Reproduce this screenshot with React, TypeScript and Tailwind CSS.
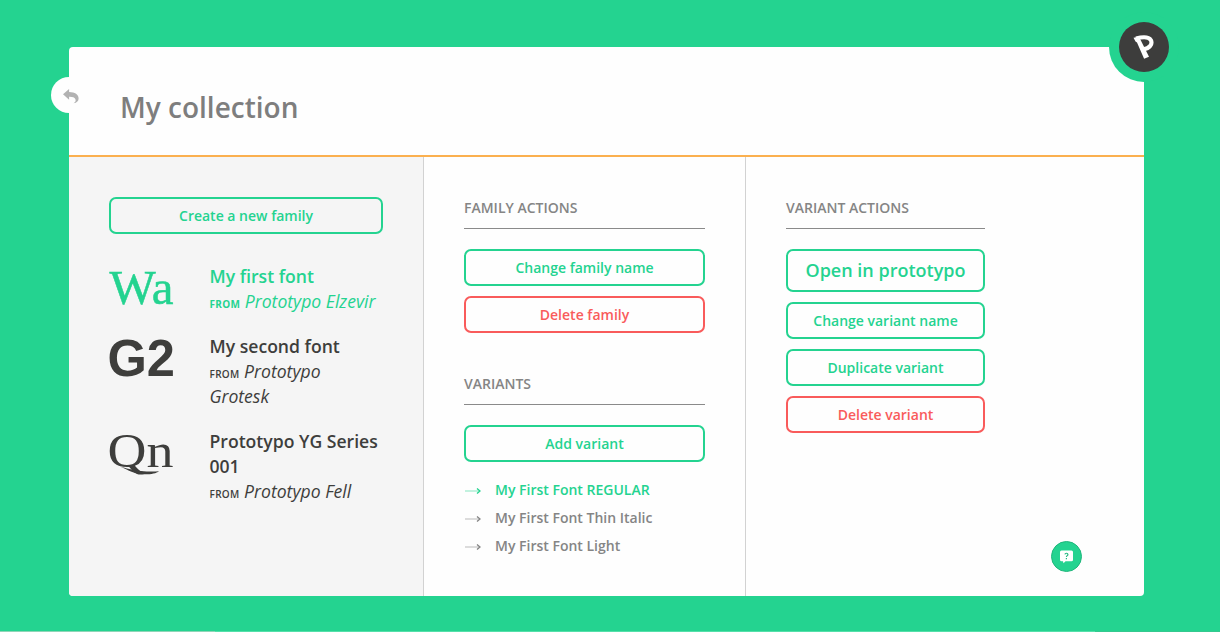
import type { ReactNode } from "react";

type Tone = "green" | "red";

function ActionButton({ children, tone = "green", large = false }: { children: ReactNode; tone?: Tone; large?: boolean }) {
  const color = tone === "green" ? "border-[#24d390] text-[#24d390]" : "border-[#f95b5b] text-[#f95b5b]";
  const size = large ? "h-[43px] text-[18px]" : "h-[37px] text-[14px]";
  return (
    <button className={`flex w-full items-center justify-center rounded-[7px] border-2 pb-px font-semibold whitespace-nowrap ${color} ${size}`}>
      {children}
    </button>
  );
}

function SectionTitle({ children }: { children: ReactNode }) {
  return (
    <h2 className="mb-5 h-8 border-b border-[#8a8a8a] text-[14px] leading-[21px] font-semibold text-[#858585] uppercase">
      {children}
    </h2>
  );
}

type Family = { sample: string; name: string; base: string; active?: boolean; font: string; size: number; weight: number; stroke: number; x: number; y: number; width: number; swash?: string };

const families: Family[] = [
  { sample: "Wa", name: "My first font", base: "Prototypo Elzevir", active: true, font: "Liberation Serif, serif", size: 48, weight: 400, stroke: 0.5, x: 0.5, y: 40, width: 64 },
  { sample: "G2", name: "My second font", base: "Prototypo Grotesk", font: "Liberation Sans, sans-serif", size: 51, weight: 700, stroke: 0, x: -1.5, y: 42, width: 67.5 },
  { sample: "Qn", name: "Prototypo YG Series 001", base: "Prototypo Fell", font: "Liberation Serif, serif", size: 49, weight: 400, stroke: 0, x: -1.5, y: 37.5, width: 66, swash: "M11 37.5C17 39.4 23 40.8 32 41.9C39 42.8 45 42.8 50 42.2C47 44.8 39 45.8 32 45.1C22 44 17 39.8 11 37.5Z" },
];

function FamilyRow({ family }: { family: Family }) {
  return (
    <li className={`mb-5 flex ${family.active ? "text-[#24d390]" : "text-[#3e3e3c]"}`}>
      <svg className="h-[50px] w-[100.5px] shrink-0 overflow-visible" viewBox="0 0 100.5 50" fill="currentColor">
        <text x={family.x} y={family.y} fontFamily={family.font} fontSize={family.size} fontWeight={family.weight} stroke="currentColor" strokeWidth={family.stroke} textLength={family.width} lengthAdjust="spacingAndGlyphs">
          {family.sample}
        </text>
        {family.swash && <path d={family.swash} />}
      </svg>
      <div className="w-[171px] text-[17.6px] leading-[25px]">
        <div className="font-semibold">{family.name}</div>
        <div>
          <span className={`text-[10px] leading-none tracking-[0.3px] ${family.active ? "font-bold" : "font-semibold"}`}>FROM</span>{" "}
          <em>{family.base}</em>
        </div>
      </div>
    </li>
  );
}

function Variant({ children, active = false }: { children: ReactNode; active?: boolean }) {
  return (
    <li className={`flex h-7 items-center text-[14px] font-semibold ${active ? "text-[#24d390]" : "text-[#858585]"}`}>
      <svg className="mt-[3px] mr-[13px] h-[8px] w-[18px]" viewBox="0 0 18 8" fill="none" stroke="currentColor">
        <path d="M1 4H15" strokeOpacity="0.55" strokeWidth="1" />
        <path d="M13 1.4L16 4L13 6.6" strokeWidth="1.3" />
      </svg>
      {children}
    </li>
  );
}

export default function App() {
  return (
    <div className="flex h-[632px] w-[1220px] flex-col bg-[#24d390] font-['Open_Sans',sans-serif]">
      <main className="relative mt-[47px] ml-[69px] flex h-[549px] w-[1075px] flex-col rounded bg-[#fefefe]">
        <button aria-label="Back" className="absolute top-[30px] left-[-18px] flex h-9 w-9 items-center justify-center rounded-full bg-[#fefefe]">
          <svg className="mt-[2px] ml-[3px] h-[15px] w-4" viewBox="0 0 16 15" fill="#b2b2b2">
            <path d="M6.1 0V3.1C12 3.3 15.6 5.6 15.6 9.4C15.6 11.7 14 13.6 10.5 14.3C12.7 12.9 13.1 11.6 12.3 10C11.5 8.4 9.4 7.7 6.1 7.8V10.7L0 5.2Z" />
          </svg>
        </button>
        <div className="absolute top-[-35px] right-[-35px] flex h-[70px] w-[70px] items-center justify-center rounded-full bg-[#24d390]">
          <div className="flex h-[50px] w-[50px] items-center justify-center rounded-full bg-[#3d3d3c]">
            <svg className="h-7 w-7" viewBox="0 0 28 28" fill="none" stroke="white">
              <path d="M3.5 4.8L9 3.8L19 23.7L14.1 25.7L7 9.5L5.5 8.6Z" fill="white" stroke="none" />
              <path d="M6 5.4C11.5 4 18.5 3.2 20.8 7C23 11.3 19.5 15.2 13.5 16.3" strokeWidth="4.1" />
            </svg>
          </div>
        </div>
        <header className="flex h-[110px] shrink-0 items-center border-b-2 border-[#fbb04f] pl-[51px]">
          <h1 className="pt-[12px] text-[28px] font-semibold text-[#7e7e7e]">My collection</h1>
        </header>
        <div className="flex flex-1">
          <section className="w-[355px] rounded-bl border-r border-[#d2d2d2] bg-[#f5f5f5] pt-10 pl-10">
            <div className="w-[274px]"><ActionButton>Create a new family</ActionButton></div>
            <ul className="mt-[30px]">
              {families.map((family) => <FamilyRow key={family.name} family={family} />)}
            </ul>
          </section>
          <section className="w-[322px] border-r border-[#d2d2d2] px-10 pt-10">
            <SectionTitle>Family actions</SectionTitle>
            <div className="flex flex-col gap-[10px]">
              <ActionButton>Change family name</ActionButton>
              <ActionButton tone="red">Delete family</ActionButton>
            </div>
            <div className="mt-10">
              <SectionTitle>Variants</SectionTitle>
              <ActionButton>Add variant</ActionButton>
            </div>
            <ul className="mt-[13px]">
              <Variant active>My First Font REGULAR</Variant>
              <Variant>My First Font Thin Italic</Variant>
              <Variant>My First Font Light</Variant>
            </ul>
          </section>
          <section className="w-[239px] pt-10 pl-10">
            <SectionTitle>Variant actions</SectionTitle>
            <div className="flex flex-col gap-[10px]">
              <ActionButton large>Open in prototypo</ActionButton>
              <ActionButton>Change variant name</ActionButton>
              <ActionButton>Duplicate variant</ActionButton>
              <ActionButton tone="red">Delete variant</ActionButton>
            </div>
          </section>
        </div>
        <button aria-label="Help" className="absolute right-[62px] bottom-[24px] flex h-[31px] w-[31px] items-center justify-center rounded-full border-[1.5px] border-[#20b77c] bg-[#24d390]">
          <svg className="h-[15px] w-[15px]" viewBox="0 0 15 15">
            <path d="M2.5 1.5H12.5Q14 1.5 14 3V10.7Q14 12.2 12.5 12.2H6.5L4.5 14.2L4 12.2H2.5Q1 12.2 1 10.7V3Q1 1.5 2.5 1.5Z" fill="white" />
            <path d="M5.9 5.4C6.2 3.8 9 3.9 8.9 5.6C8.8 6.7 7.4 6.7 7.4 8.1M7.4 9V10.2" fill="none" stroke="#24b982" strokeWidth="1.2" />
          </svg>
        </button>
      </main>
      <footer className="mt-auto flex h-px">
        <div className="w-[215px] bg-[#8fd5b7]" />
        <div className="w-[880px] bg-[#55e0aa]" />
        <div className="flex-1 bg-[#35c98f]" />
      </footer>
    </div>
  );
}
